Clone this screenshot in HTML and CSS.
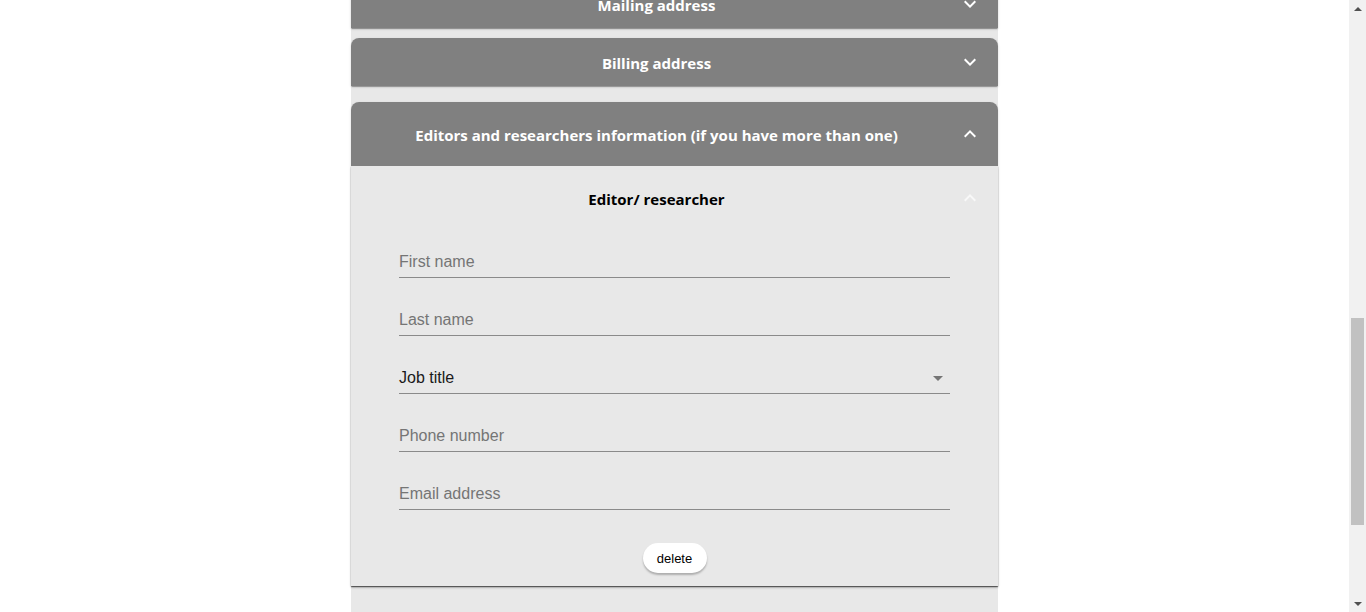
FILE: index.html
```html
<!DOCTYPE html>
<html lang="en">
<head>
<meta charset="utf-8">
<title>Editors form</title>
<link rel="stylesheet" href="styles.css">
</head>
<body>
<div class="page">
  <main class="viewport">
    <div class="container">
      <section class="acc acc-mailing">
        <div class="summary">
          <span class="title">Mailing address</span>
          <span class="icon-btn"><svg viewBox="0 0 24 24" width="24" height="24"><path d="M16.59 8.59L12 13.17 7.41 8.59 6 10l6 6 6-6z"/></svg></span>
        </div>
      </section>
      <section class="acc acc-billing">
        <div class="summary">
          <span class="title">Billing address</span>
          <span class="icon-btn"><svg viewBox="0 0 24 24" width="24" height="24"><path d="M16.59 8.59L12 13.17 7.41 8.59 6 10l6 6 6-6z"/></svg></span>
        </div>
      </section>
      <section class="acc acc-open">
        <div class="summary summary-open">
          <span class="title">Editors and researchers information (if you have more than one)</span>
          <span class="icon-btn up"><svg viewBox="0 0 24 24" width="24" height="24"><path d="M16.59 8.59L12 13.17 7.41 8.59 6 10l6 6 6-6z"/></svg></span>
        </div>
        <div class="details">
          <div class="inner">
            <div class="summary summary-open inner-summary">
              <span class="title">Editor/ researcher</span>
              <span class="icon-btn up faint"><svg viewBox="0 0 24 24" width="24" height="24"><path d="M16.59 8.59L12 13.17 7.41 8.59 6 10l6 6 6-6z"/></svg></span>
            </div>
            <div class="fields">
              <div class="field"><span class="label">First name</span></div>
              <div class="field"><span class="label">Last name</span></div>
              <div class="field select"><span class="value">Job title</span><svg class="arrow" viewBox="0 0 24 24" width="24" height="24"><path d="M7 10l5 5 5-5z"/></svg></div>
              <div class="field"><span class="label">Phone number</span></div>
              <div class="field"><span class="label">Email address</span></div>
            </div>
            <div class="actions"><button class="delete" type="button">delete</button></div>
          </div>
        </div>
      </section>
    </div>
  </main>
  <div class="scrollbar">
    <div class="sb-btn"><span class="tri-up"></span></div>
    <div class="sb-track"><div class="sb-thumb"></div></div>
    <div class="sb-btn"><span class="tri-down"></span></div>
  </div>
</div>
</body>
</html>
```
FILE: styles.css
```css
html, body {
  margin: 0;
  padding: 0;
  height: 612px;
  overflow: hidden;
  background: #ffffff;
}

.page {
  display: flex;
  height: 612px;
}

.viewport {
  flex: 1;
  display: flex;
  justify-content: center;
  overflow: hidden;
  background: #ffffff;
}

.container {
  width: 647px;
  background: #e8e8e8;
  display: flex;
  flex-direction: column;
  margin-top: -20px;
  padding-bottom: 60px;
}

.acc {
  background: #e8e8e8;
  border-radius: 8px 8px 0 0;
  box-shadow: 0 2px 1px -1px rgba(0,0,0,0.2), 0 1px 1px 0 rgba(0,0,0,0.14), 0 1px 3px 0 rgba(0,0,0,0.12);
}

.acc-mailing { border-radius: 0; }
.acc-billing { margin-top: 10px; }
.acc-open { margin-top: 16px; }

.summary {
  display: flex;
  align-items: center;
  height: 48px;
  padding: 0 16px;
  background: #808080;
  border-radius: inherit;
}

.summary-open {
  height: 64px;
  border-radius: 8px 8px 0 0;
}

.title {
  flex: 1;
  text-align: center;
  font-family: "Open Sans", "Noto Sans", sans-serif;
  font-weight: 700;
  font-size: 15px;
  color: #ffffff;
  padding-top: 2px;
}

.icon-btn {
  width: 48px;
  height: 48px;
  margin-right: -12px;
  display: flex;
  align-items: center;
  justify-content: center;
}

.icon-btn svg { fill: #ffffff; }
.icon-btn.up svg { transform: rotate(180deg); }
.icon-btn.faint svg { fill: rgba(255,255,255,0.7); }

.details {
  background: #e8e8e8;
}

.inner {
  background: #e8e8e8;
  box-shadow: 0 1px 1px 0 rgba(0,0,0,0.35), 0 2px 2px 0 rgba(0,0,0,0.12);
  padding-bottom: 13px;
}

.inner-summary {
  background: #e8e8e8;
}

.inner-summary .title {
  color: #000000;
}

.fields {
  padding: 15px 48px 0 48px;
  display: flex;
  flex-direction: column;
  gap: 25px;
}

.field {
  height: 32px;
  box-sizing: border-box;
  padding-top: 2px;
  border-bottom: 1px solid #8a8a8a;
  display: flex;
  align-items: center;
  justify-content: space-between;
  font-family: "Liberation Sans", Arial, sans-serif;
  font-size: 16px;
}

.fields .field { height: 33px; }

.field .label { color: #757575; }
.field .value { color: #1a1a1a; }

.field .arrow {
  fill: #757575;
}

.actions {
  display: flex;
  justify-content: center;
  padding-top: 33px;
}

.delete {
  width: 64px;
  height: 30px;
  border: none;
  border-radius: 15px;
  background: #ffffff;
  font-family: "Liberation Sans", Arial, sans-serif;
  font-size: 13px;
  color: #000000;
  padding: 0;
  box-shadow: 0 2px 2px rgba(0,0,0,0.25);
}

.scrollbar {
  width: 17px;
  background: #f1f1f1;
  display: flex;
  flex-direction: column;
}

.sb-btn {
  height: 17px;
  display: flex;
  align-items: center;
  justify-content: center;
}

.tri-up, .tri-down {
  width: 0;
  height: 0;
  border-left: 4px solid transparent;
  border-right: 4px solid transparent;
}

.tri-up { border-bottom: 4px solid #505050; }
.tri-down { border-top: 4px solid #505050; }

.sb-track {
  flex: 1;
}

.sb-thumb {
  margin: 301px 2px 0 2px;
  height: 207px;
  background: #c1c1c1;
}
```
